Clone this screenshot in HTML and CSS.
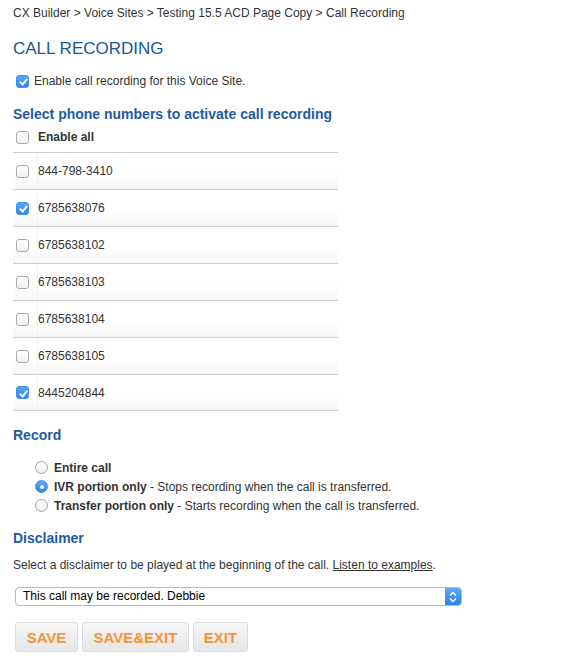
FILE: index.html
```html
<!DOCTYPE html>
<html>
<head>
<meta charset="utf-8">
<link rel="stylesheet" href="styles.css">
</head>
<body>
<div class="page">
  <div class="crumbs">CX Builder &gt; Voice Sites &gt; Testing 15.5 ACD Page Copy &gt; Call Recording</div>
  <h1 class="title">CALL RECORDING</h1>
  <label class="enable"><span class="cb on"></span>Enable call recording for this Voice Site.</label>

  <h2 class="head first">Select phone numbers to activate call recording</h2>
  <div class="table">
    <div class="row hdr"><span class="c1"><span class="cb"></span></span><span class="c2">Enable all</span></div>
    <div class="row"><span class="c1"><span class="cb"></span></span><span class="c2">844-798-3410</span></div>
    <div class="row"><span class="c1"><span class="cb on"></span></span><span class="c2">6785638076</span></div>
    <div class="row"><span class="c1"><span class="cb"></span></span><span class="c2">6785638102</span></div>
    <div class="row"><span class="c1"><span class="cb"></span></span><span class="c2">6785638103</span></div>
    <div class="row"><span class="c1"><span class="cb"></span></span><span class="c2">6785638104</span></div>
    <div class="row"><span class="c1"><span class="cb"></span></span><span class="c2">6785638105</span></div>
    <div class="row last"><span class="c1"><span class="cb on"></span></span><span class="c2">8445204844</span></div>
  </div>

  <h2 class="head rec">Record</h2>
  <div class="radios">
    <div class="radio"><span class="rb"></span><b>Entire call</b></div>
    <div class="radio"><span class="rb on"></span><b>IVR portion only</b>&nbsp;- Stops recording when the call is transferred.</div>
    <div class="radio"><span class="rb"></span><b>Transfer portion only</b>&nbsp;- Starts recording when the call is transferred.</div>
  </div>

  <h2 class="head disc">Disclaimer</h2>
  <p class="desc">Select a disclaimer to be played at the beginning of the call. <a href="#">Listen to examples</a>.</p>
  <div class="select">
    <span class="sel-text">This call may be recorded. Debbie</span>
    <span class="stepper"><svg width="16" height="18" viewBox="0 0 16 18"><path d="M5 7.5 L8 4.5 L11 7.5 M5 10.5 L8 13.5 L11 10.5" fill="none" stroke="#fff" stroke-width="1.5"/></svg></span>
  </div>
  <div class="buttons">
    <button class="btn w1">SAVE</button>
    <button class="btn w2">SAVE&amp;EXIT</button>
    <button class="btn w3">EXIT</button>
  </div>
</div>
</body>
</html>
```

FILE: styles.css
```css
* { box-sizing: border-box; }
html, body { margin: 0; padding: 0; background: #fff; }
body {
  font-family: "Liberation Sans", Arial, Helvetica, sans-serif;
  font-size: 12px;
  color: #333;
}
.page { padding: 6px 0 0 13px; }
.crumbs { height: 14px; line-height: 14px; color: #333; }
.title {
  margin: 20px 0 0;
  font-size: 17px;
  font-weight: normal;
  color: #1a5598;
  height: 18px;
  line-height: 18px;
}
.enable {
  display: flex;
  align-items: center;
  height: 14px;
  margin-top: 16px;
}
.enable .cb { margin-right: 5px; }
.cb {
  position: relative;
  display: inline-block;
  width: 13px;
  height: 13px;
  border: 1px solid #a9a9a9;
  border-radius: 3px;
  background: linear-gradient(#fff, #f2f2f2);
  margin: 0 8px 0 3px;
  flex: none;
}
.cb.on {
  border-color: #3a8ff0;
  background: linear-gradient(#5aa5f7, #2f86ef);
}
.cb.on::after {
  content: "";
  position: absolute;
  left: 3.5px;
  top: 1.5px;
  width: 3px;
  height: 6px;
  border-right: 2px solid #fff;
  border-bottom: 2px solid #fff;
  transform: rotate(40deg);
}
.head {
  margin: 0;
  font-size: 14px;
  font-weight: bold;
  color: #1f5ba3;
  height: 16px;
  line-height: 16px;
}
.head.first { margin-top: 18px; }
.table { width: 325px; margin-top: 0; }
.row {
  display: flex;
  align-items: center;
  height: 37px;
  border-top: 1px solid #cfcfcf;
  background: linear-gradient(#fff 60%, #f6f6f6);
}
.row.hdr {
  border-top: none;
  height: 30px;
  background: none;
  font-weight: bold;
}
.row.last { border-bottom: 1px solid #cfcfcf; }
.c1 {
  display: flex;
  align-items: center;
  width: 25px;
  align-self: stretch;
  border-right: 1px solid #f4f4f4;
}
.row.hdr .c1 { border-right: none; }
.c1 .cb { margin: 0 0 0 3px; }
.c2 { padding-left: 0; }
.head.rec { margin-top: 16px; }
.radios { margin: 15px 0 0 22px; }
.radio {
  display: flex;
  align-items: center;
  height: 19px;
}
.radio b { font-weight: bold; }
.rb {
  position: relative;
  display: inline-block;
  width: 13px;
  height: 13px;
  border-radius: 50%;
  border: 1px solid #a3a3a3;
  background: linear-gradient(#fff, #f1f1f1);
  margin-right: 6px;
  flex: none;
}
.rb.on {
  border-color: #3a8ff0;
  background: linear-gradient(#5aa5f7, #2f86ef);
}
.rb.on::after {
  content: "";
  position: absolute;
  left: 3.5px;
  top: 3.5px;
  width: 4px;
  height: 4px;
  border-radius: 50%;
  background: #fff;
}
.head.disc { margin-top: 15px; }
.desc { margin: 12px 0 0; height: 14px; line-height: 14px; }
.desc a { color: #333; text-decoration: underline; }
.select {
  display: flex;
  align-items: center;
  width: 447px;
  height: 19px;
  margin: 15px 0 0 2px;
  border: 1px solid #b9b9b9;
  border-radius: 4px;
  background: #fff;
  overflow: hidden;
  color: #000;
  font-size: 12px;
}
.sel-text { flex: 1; padding-left: 7px; line-height: 17px; }
.stepper {
  display: flex;
  align-items: center;
  justify-content: center;
  width: 16px;
  height: 100%;
  background: linear-gradient(#5ea8f8, #2a80ee);
}
.buttons {
  display: flex;
  gap: 4px;
  margin: 16px 0 0 2px;
}
.btn {
  height: 30px;
  padding: 0;
  border: 1px solid #dcdcdc;
  border-radius: 3px;
  background: linear-gradient(#f6f6f6, #e6e6e6);
  color: #f5953a;
  font-family: "Liberation Sans", Arial, sans-serif;
  font-weight: bold;
  font-size: 15px;
  cursor: pointer;
}
.w1 { width: 63px; }
.w2 { width: 107px; }
.w3 { width: 55px; }
```
